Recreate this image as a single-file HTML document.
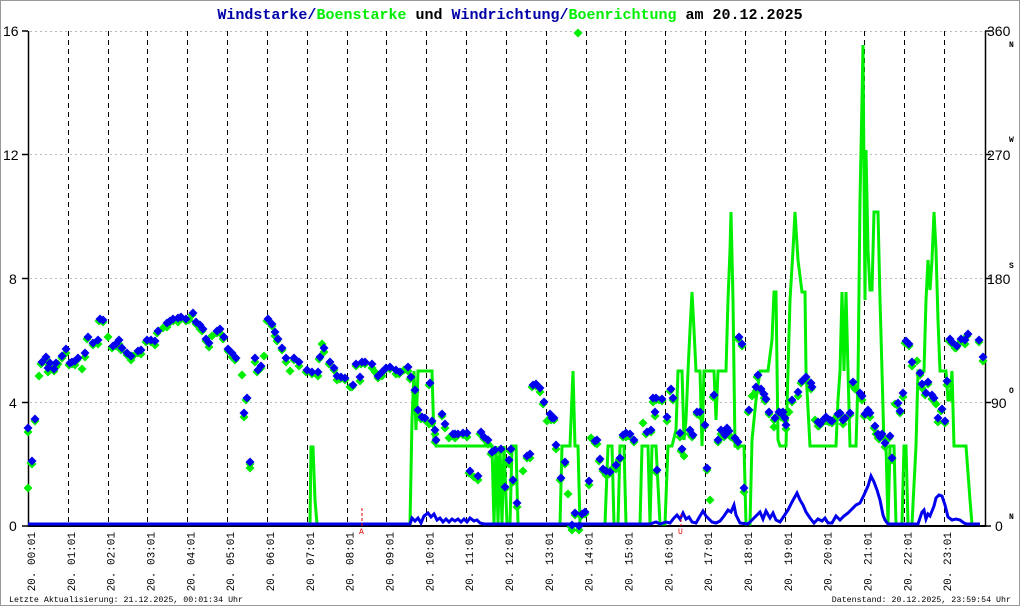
<!DOCTYPE html>
<html><head><meta charset="utf-8"><style>
html,body{margin:0;padding:0;background:#fff}
svg{display:block}
</style></head><body>
<svg id="s" width="1020" height="606" xmlns="http://www.w3.org/2000/svg" font-family="Liberation Mono, monospace">
<rect x="0.5" y="0.5" width="1019" height="605" fill="#fff" stroke="#999"/>
<text x="510" y="19" text-anchor="middle" font-size="15" font-weight="bold"><tspan fill="#0000a8">Windstarke/</tspan><tspan fill="#00ee00">Boenstarke</tspan><tspan fill="#000"> und </tspan><tspan fill="#0000a8">Windrichtung/</tspan><tspan fill="#00ee00">Boenrichtung</tspan><tspan fill="#000"> am 20.12.2025</tspan></text>
<g stroke="#bbb" stroke-dasharray="2,3" stroke-width="1">
<line x1="30" y1="31.5" x2="984" y2="31.5"/><line x1="30" y1="154.5" x2="984" y2="154.5"/><line x1="30" y1="278.5" x2="984" y2="278.5"/><line x1="30" y1="402.5" x2="984" y2="402.5"/>
</g>
<g id="vg" stroke="#000" stroke-dasharray="5,4" stroke-width="1"></g>
<g stroke="#000" stroke-width="1.5">
<line x1="28.5" y1="31" x2="28.5" y2="527"/><line x1="985.5" y1="31" x2="985.5" y2="527"/>
<line x1="22" y1="31" x2="28" y2="31"/><line x1="22" y1="154.5" x2="28" y2="154.5"/><line x1="22" y1="278.5" x2="28" y2="278.5"/><line x1="22" y1="402.5" x2="28" y2="402.5"/><line x1="22" y1="526" x2="28" y2="526"/>
<line x1="985" y1="31" x2="991" y2="31"/><line x1="985" y1="154.5" x2="991" y2="154.5"/><line x1="985" y1="278.5" x2="991" y2="278.5"/><line x1="985" y1="402.5" x2="991" y2="402.5"/><line x1="985" y1="526" x2="991" y2="526"/>
</g>
<g font-family="Liberation Sans, sans-serif" font-size="14" fill="#000">
<text x="3" y="36">16</text><text x="3" y="160">12</text><text x="9" y="284">8</text><text x="9" y="408">4</text><text x="9" y="531">0</text>
<text x="987" y="36">360</text><text x="987" y="160">270</text><text x="987" y="284">180</text><text x="991" y="408">90</text><text x="995" y="531">0</text>
</g>
<g font-size="8" font-weight="bold" fill="#000">
<text x="1009" y="47">N</text><text x="1009" y="142">W</text><text x="1009" y="268">S</text><text x="1009" y="393">O</text><text x="1009" y="519">N</text>
</g>
<line x1="28" y1="526" x2="985" y2="526" stroke="#000" stroke-width="2"/>
<polyline id="gust" fill="none" stroke="#00ee00" stroke-width="3" points="28,524 310,524 311,447 313,447 315,500 317,524 410,524 412,420 414,371 416,430 418,371 420,371 432,371 434,440 436,446 492,446 494,524 496,446 498,524 500,446 502,524 504,446 507,524 510,524 512,446 516,446 518,524 560,524 562,446 570,446 573,371 575,446 578,446 580,524 605,524 608,446 612,446 614,524 618,524 620,446 624,446 626,524 640,524 642,446 648,446 650,524 652,446 656,446 660,524 665,524 668,446 672,446 676,430 678,371 682,371 684,440 686,420 688,371 690,330 692,292 694,330 696,371 700,371 702,446 704,371 714,371 716,420 718,371 726,371 728,300 730,250 731,212 733,300 735,446 744,446 746,524 750,524 752,440 756,400 760,371 768,371 772,340 774,292 776,292 778,440 780,446 786,446 788,371 790,300 793,250 795,212 798,260 802,292 805,292 806,371 810,446 836,446 838,400 840,371 842,292 844,371 846,292 848,371 850,446 856,446 858,380 860,200 862,100 863,45 865,300 866,150 868,250 870,290 872,290 874,212 878,212 880,300 882,371 884,446 886,446 888,524 890,446 894,446 896,524 902,524 904,446 906,446 908,524 912,524 916,446 918,371 924,371 926,300 928,260 930,290 932,260 934,212 936,250 938,320 940,371 946,371 948,400 950,400 952,371 954,446 966,446 970,500 972,524 980,524"/>
<polyline fill="none" stroke="#0000ee" stroke-width="3" points="28,524 410,524 412,518 415,521 418,518 421,523 424,516 428,513 431,517 434,514 437,520 440,518 443,522 446,519 449,522 452,519 455,521 458,519 461,522 464,519 467,522 470,518 474,521 477,520 480,523 484,524 510,524 520,524 560,524 600,524 640,524 650,524 656,522 660,524 666,522 670,523 674,518 677,515 680,519 683,513 686,519 689,517 692,522 696,523 700,516 703,511 706,516 709,519 712,522 716,523 720,521 724,516 728,510 731,512 734,505 736,515 740,523 748,524 752,520 756,516 760,512 763,519 766,511 770,518 773,513 776,520 780,522 784,516 788,510 792,502 797,493 800,500 803,505 806,512 810,518 814,523 818,519 822,521 825,518 828,523 832,523 836,516 840,520 844,516 848,513 852,509 856,505 860,503 864,495 868,486 871,476 874,482 877,490 880,500 883,515 885,520 888,524 900,524 906,524 910,524 918,524 922,512 924,510 926,519 928,514 930,516 934,506 936,498 939,495 942,496 945,505 948,517 952,520 956,519 960,520 964,523 967,524 980,524"/>
<g id="gd" fill="#00ee00"></g>
<g id="bd" fill="#0000ee"></g>
<g stroke="#e00" stroke-width="1" stroke-dasharray="3,2"><line x1="362" y1="508" x2="362" y2="526"/><line x1="681" y1="514" x2="681" y2="526"/></g>
<g font-size="8" fill="#e00"><text x="359" y="534">A</text><text x="678" y="534">U</text></g>
<g id="xl" font-size="11" fill="#000"></g>
<text x="9" y="602" font-size="8.3" fill="#000">Letzte Aktualisierung: 21.12.2025, 00:01:34 Uhr</text>
<text x="1011" y="602" font-size="8.3" fill="#000" text-anchor="end">Datenstand: 20.12.2025, 23:59:54 Uhr</text>
</svg>
<script>
var NS="http://www.w3.org/2000/svg";
function el(p,t,a,txt){var e=document.createElementNS(NS,t);for(var k in a)e.setAttribute(k,a[k]);if(txt)e.textContent=txt;document.getElementById(p).appendChild(e);return e;}
for(var h=0;h<24;h++){var x=28+39.83*h;if(h>0)el("vg","line",{x1:Math.round(x)+.5,y1:31,x2:Math.round(x)+.5,y2:526});
var hh=(h<10?"0":"")+h;var t=el("xl","text",{x:0,y:0,transform:"translate("+(x+7)+",532) rotate(-90)","text-anchor":"end"},"20. "+hh+":01");}
var P=[28,428,32,461,35,419,39,372,42,362,46,357,48,368,50,363,54,369,56,363,59,362,62,356,66,349,70,363,72,362,75,361,78,358,82,367,85,353,88,337,93,343,98,340,100,319,103,320,108,333,113,346,116,344,119,340,122,348,127,353,131,356,134,354,138,351,141,350,147,340,151,340,155,341,158,331,163,326,167,323,170,321,173,319,178,318,181,317,186,319,189,316,193,313,196,322,200,325,203,329,206,339,209,343,213,334,217,331,220,329,224,337,228,349,232,353,236,358,242,373,244,413,247,398,250,462,255,358,258,370,261,366,264,352,268,319,272,324,275,332,278,339,282,348,286,358,291,369,294,358,299,362,307,370,312,372,318,372,320,357,322,342,324,348,330,362,334,368,337,376,341,377,345,378,350,383,353,385,356,364,360,377,362,362,365,362,372,364,376,370,378,376,382,372,386,368,390,367,396,370,400,372,404,368,408,367,411,377,415,390,418,410,422,417,425,418,429,420,430,383,432,421,435,430,436,440,442,414,445,424,450,436,453,434,455,434,458,434,463,433,467,433,470,471,474,475,478,476,481,432,484,437,488,440,492,452,495,450,498,456,501,449,505,487,509,460,511,449,513,480,517,503,524,469,527,456,530,454,533,385,536,384,540,388,544,402,547,419,550,414,552,418,554,418,556,445,561,478,565,462,568,490,572,525,575,513,579,526,582,514,585,512,589,481,592,436,595,441,597,440,600,459,603,469,606,471,610,472,613,466,616,465,620,458,623,435,626,433,630,434,634,440,643,419,647,432,651,430,655,412,657,470,656,398,653,398,660,398,662,399,667,417,671,389,673,398,680,433,682,449,684,454,690,430,693,435,697,412,700,412,705,425,707,468,710,496,714,395,718,440,721,430,725,435,727,428,729,431,732,435,735,438,738,442,739,337,742,344,744,488,749,410,752,394,756,387,758,375,761,389,764,394,766,399,769,412,774,423,775,418,779,412,781,413,783,412,785,418,786,425,790,410,792,400,798,392,802,381,806,377,811,383,812,387,815,418,818,422,820,424,823,420,826,417,830,420,832,421,834,416,838,414,840,413,843,420,845,418,850,413,853,382,856,387,860,393,862,396,865,414,868,410,870,413,875,426,876,432,878,434,880,437,882,434,885,443,890,436,892,458,895,400,898,403,900,411,903,393,906,341,909,344,912,362,918,359,920,373,922,384,926,393,928,382,932,395,934,398,936,402,938,418,942,409,945,421,947,381,950,339,952,342,955,344,957,346,961,339,965,340,968,334,979,340,983,357];
function dia(g,x,y){el(g,"polygon",{points:(x)+","+(y-4.5)+" "+(x+4.5)+","+y+" "+x+","+(y+4.5)+" "+(x-4.5)+","+y});}
for(var i=0;i<P.length;i+=2){var j=(i/2)%3;dia("gd",P[i]+(j==1?-1:0),P[i+1]+(j==0?4:2));}
dia("gd",578,33);dia("gd",28,488);dia("gd",32,464);dia("gd",250,468);dia("gd",572,530);
for(var i=0;i<P.length;i+=2){if((i/2)%7!=3)dia("bd",P[i],P[i+1]);}
</script>
</body></html>
